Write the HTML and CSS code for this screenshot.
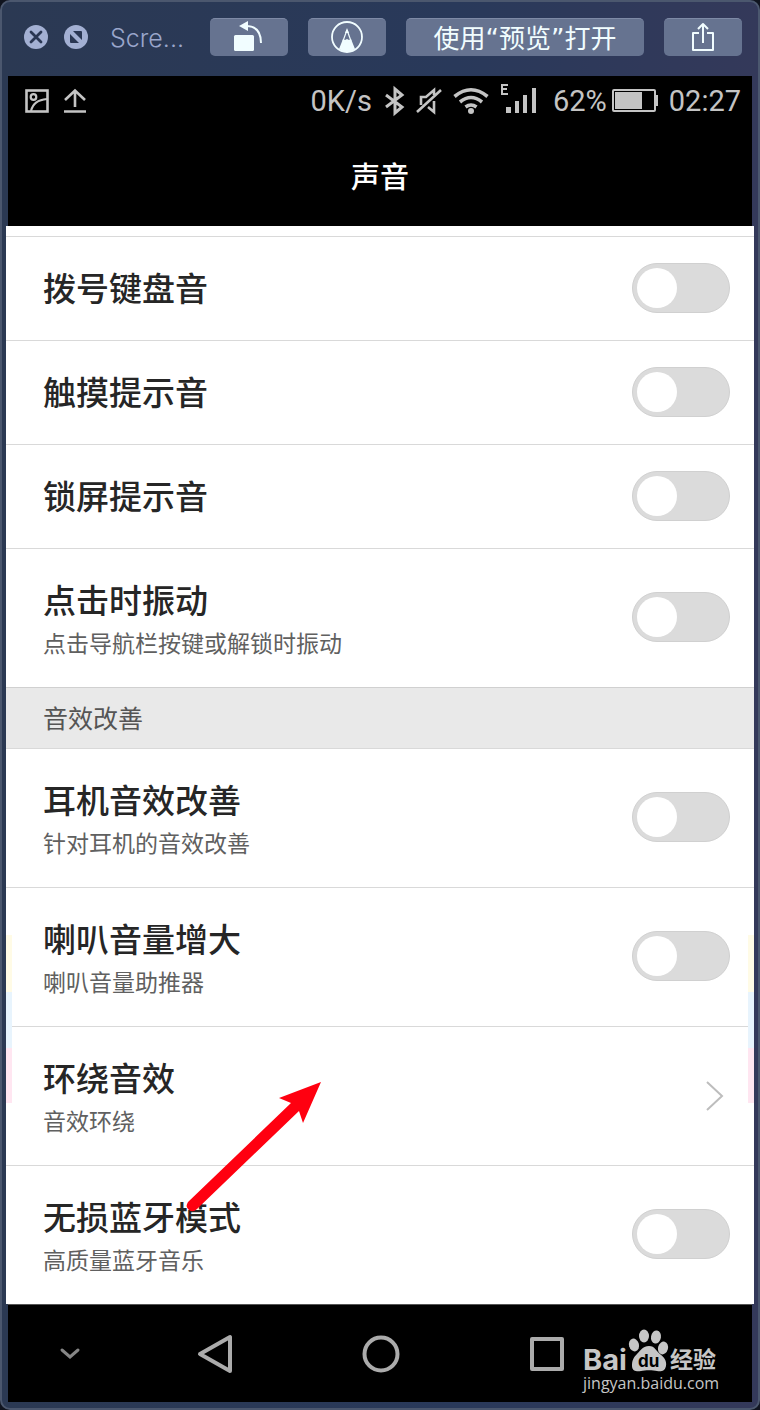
FILE: index.html
```html
<!DOCTYPE html>
<html lang="zh-CN">
<head>
    <meta charset="UTF-8">
    <meta name="viewport" content="width=device-width, initial-scale=1.0">
    <title>声音</title>
    <link rel="stylesheet" href="styles.css">
</head>
<body>

<div class="window">
    <div class="toolbar">
        <button type="button" class="round-button" aria-label="关闭">
            <svg width="24" height="24" viewBox="0 0 24 24">
                <circle cx="12" cy="12" r="12" fill="#a3b0d3"/>
                <path d="M7 7l10 10M17 7L7 17" stroke="#2a3753" stroke-width="2.8" stroke-linecap="round"/>
            </svg>
        </button>
        <button type="button" class="round-button" aria-label="全屏">
            <svg width="24" height="24" viewBox="0 0 24 24">
                <circle cx="12" cy="12" r="12" fill="#a3b0d3"/>
                <path d="M9 6h8a1 1 0 0 1 1 1v8zM6 9v8a1 1 0 0 0 1 1h8z" fill="#2a3753"/>
            </svg>
        </button>
        <span class="window-title">Scre...</span>
        <button type="button" class="tool-button" aria-label="旋转">
            <svg width="30" height="32" viewBox="0 0 30 32" fill="none">
                <rect x="0" y="14" width="20" height="16" rx="1.5" fill="#f1fdff"/>
                <path d="M12 5C22 5 27 11 27 22" stroke="#f1fdff" stroke-width="2"/>
                <path d="M5 5l9-5v10z" fill="#f1fdff"/>
            </svg>
        </button>
        <button type="button" class="tool-button" aria-label="标记">
            <svg width="32" height="32" viewBox="0 0 32 32" fill="none">
                <circle cx="16" cy="16" r="15" stroke="#f1fdff" stroke-width="1.8"/>
                <path d="M16 9l-4 11M16 9l4 11" stroke="#f1fdff" stroke-width="1.2"/>
                <path d="M16 7l-2 5h4z" fill="#f1fdff"/>
                <path d="M12 18l2 1 2-1 2 1 2-1 4 10q-8 6-16 0z" fill="#f1fdff"/>
            </svg>
        </button>
        <button type="button" class="tool-button open-button">使用“预览”打开</button>
        <button type="button" class="tool-button" aria-label="共享">
            <svg width="24" height="30" viewBox="0 0 24 30" fill="none" stroke="#f1fdff" stroke-width="2" stroke-linejoin="round">
                <path d="M8 11H2v17h20V11h-6M12 21V2M7 7l5-5 5 5"/>
            </svg>
        </button>
    </div>

    <header class="phone-header">
        <div class="status-bar">
            <svg width="24" height="24" viewBox="0 0 24 24" fill="none" stroke="#c4c4c4" stroke-width="2.6">
                <rect x="1.5" y="1.5" width="21" height="21"/>
                <circle cx="8.500" cy="8" r="2.800" stroke-width="2.2"/>
                <path d="M6 22C8 14 13 11 22 10" stroke-width="2.2"/>
            </svg>
            <svg class="upload-icon" width="22" height="24" viewBox="0 0 22 24" fill="none" stroke="#c4c4c4" stroke-width="2.6">
                <path d="M11 18V2M1 11l10-9.500L21 11M0 22.500h22"/>
            </svg>
            <span>0K/s</span>
            <svg width="22" height="28" viewBox="0 0 22 28" fill="none" stroke="#c4c4c4" stroke-width="3">
                <path d="M3 8l16 12-7 6V2l7 6L3 20"/>
            </svg>
            <svg width="26" height="28" viewBox="0 0 26 28" fill="none" stroke="#c4c4c4" stroke-width="2.6">
                <path d="M1 25L25 3M5 18v-8h5l8-7v5M18 14v11l-6-5"/>
            </svg>
            <svg width="36" height="28" viewBox="0 0 36 28" fill="none" stroke="#c4c4c4" stroke-width="3.600">
                <path d="M1.500 9.500Q18-4 34.500 9.500M7 15q11-9 22 0M12.500 20q5.500-4 11 0"/>
                <circle cx="18" cy="24" r="3" fill="#c4c4c4" stroke="none"/>
            </svg>
            <svg width="42" height="34" viewBox="0 0 42 34" fill="#c4c4c4">
                <path d="M1 0h7v2H3v2h4v2H3v3h5v2H1z"/>
                <rect x="6" y="23" width="5" height="6"/>
                <rect x="15" y="17" width="4" height="12"/>
                <rect x="23" y="11" width="4" height="18"/>
                <rect x="32" y="4" width="4" height="25"/>
            </svg>
            <span class="battery">62%
                <svg width="46" height="24" viewBox="0 0 46 24" fill="none">
                    <rect x="1" y="1" width="42" height="21" rx="1" stroke="#c4c4c4" stroke-width="2"/>
                    <rect x="3" y="3" width="27" height="17" fill="#c4c4c4"/>
                    <rect x="43" y="6" width="3" height="11" fill="#c4c4c4"/>
                </svg>
            </span>
            <span>02:27</span>
        </div>
        <h1>声音</h1>
    </header>

    <main class="settings">
        <label class="row">
            <span class="row-title">拨号键盘音</span>
            <input type="checkbox" class="switch">
        </label>
        <label class="row">
            <span class="row-title">触摸提示音</span>
            <input type="checkbox" class="switch">
        </label>
        <label class="row">
            <span class="row-title">锁屏提示音</span>
            <input type="checkbox" class="switch">
        </label>
        <label class="row">
            <span class="row-text">
                <span class="row-title">点击时振动</span>
                <span class="row-note">点击导航栏按键或解锁时振动</span>
            </span>
            <input type="checkbox" class="switch">
        </label>

        <h2>音效改善</h2>

        <label class="row">
            <span class="row-text">
                <span class="row-title">耳机音效改善</span>
                <span class="row-note">针对耳机的音效改善</span>
            </span>
            <input type="checkbox" class="switch">
        </label>
        <label class="row">
            <span class="row-text">
                <span class="row-title">喇叭音量增大</span>
                <span class="row-note">喇叭音量助推器</span>
            </span>
            <input type="checkbox" class="switch">
        </label>
        <a href="#" class="row">
            <span class="row-text">
                <span class="row-title">环绕音效</span>
                <span class="row-note">音效环绕</span>
            </span>
            <svg class="chevron" width="18" height="30" viewBox="0 0 18 30" fill="none" stroke="#bdbdbd" stroke-width="2">
                <path d="M1 1l15 14L1 29"/>
            </svg>
            <span class="edge edge-left"></span>
            <span class="edge edge-right"></span>
            <svg class="arrow" width="136" height="130" viewBox="0 0 136 130">
                <path d="M134 0L92 16l12 5L1 120q-3 5 1 8t8-1L112 29l4 12z" fill="#ff0010"/>
            </svg>
        </a>
        <label class="row">
            <span class="row-text">
                <span class="row-title">无损蓝牙模式</span>
                <span class="row-note">高质量蓝牙音乐</span>
            </span>
            <input type="checkbox" class="switch">
        </label>
    </main>

    <nav class="nav-bar">
        <button type="button" aria-label="收起">
            <svg width="20" height="12" viewBox="0 0 20 12" fill="none" stroke="#858585" stroke-width="3" stroke-linecap="round">
                <path d="M2 2l8 7 8-7"/>
            </svg>
        </button>
        <button type="button" aria-label="返回">
            <svg width="36" height="40" viewBox="0 0 36 40" fill="none" stroke="#ababab" stroke-width="4" stroke-linejoin="round">
                <path d="M33 3v34L3 20z"/>
            </svg>
        </button>
        <button type="button" aria-label="主屏幕">
            <svg width="38" height="38" viewBox="0 0 38 38" fill="none" stroke="#ababab" stroke-width="4">
                <circle cx="19" cy="19" r="16.500"/>
            </svg>
        </button>
        <button type="button" aria-label="最近任务">
            <svg width="34" height="34" viewBox="0 0 34 34" fill="none" stroke="#ababab" stroke-width="4" stroke-linejoin="round">
                <rect x="2" y="2" width="30" height="30"/>
            </svg>
        </button>
        <svg class="watermark" width="140" height="68" viewBox="0 0 140 68" fill="#c6c6c6">
            <text class="logo-bai" x="0" y="40">Bai</text>
            <ellipse cx="51" cy="15" rx="5" ry="6.500" transform="rotate(-15 51 15)"/>
            <ellipse cx="61" cy="6" rx="5" ry="6.500"/>
            <ellipse cx="73" cy="7" rx="5" ry="6.500" transform="rotate(10 73 7)"/>
            <ellipse cx="80" cy="18" rx="5" ry="6.500" transform="rotate(15 80 18)"/>
            <path d="M66 16c6 0 7 5 11 8s7 7 6 12-5 6-9 5-12-1-16 0-9 0-9-5 1-8 5-12 6-8 12-8z"/>
            <text class="logo-du" x="55" y="37">du</text>
            <text class="logo-name" x="87" y="38">经验</text>
            <text class="logo-url" x="0" y="59">jingyan.baidu.com</text>
        </svg>
    </nav>
</div>

</body>
</html>
```

FILE: styles.css
```css
* {
    box-sizing: border-box;
}
body {
    margin: 0;
    background: #10141f;
    font-family: Roboto, "Noto Sans CJK SC", sans-serif;
}
button {
    padding: 0;
    border: none;
    background: none;
    cursor: pointer;
}
svg {
    display: block;
    flex: none;
    overflow: visible;
}
.window {
    display: flex;
    flex-direction: column;
    border: 2px solid #4b576e;
    border-radius: 10px;
    background: linear-gradient(90deg, #2b3953, #29395a 60%, #34395a);
    overflow: hidden;
}

/* preview toolbar */
.toolbar {
    display: flex;
    align-items: center;
    height: 74px;
    padding: 0 16px 4px 22px;
}
.round-button {
    margin-right: 16px;
}
.window-title {
    width: 85px;
    margin-left: 6px;
    padding-top: 2px;
    color: #9aa6cb;
    font-family: Inter, sans-serif;
    font-size: 25px;
    font-weight: 300;
}
.tool-button {
    display: flex;
    align-items: center;
    justify-content: center;
    width: 78px;
    height: 38px;
    margin-left: 20px;
    padding-bottom: 2px;
    border-top: 1px solid #7e8aa6;
    border-radius: 5px;
    background: #667390;
    color: #f1fdff;
}
.window-title + .tool-button {
    margin-left: 15px;
}
.open-button {
    flex: 1;
    font-family: "DejaVu Sans", "Noto Sans CJK SC", sans-serif;
    font-size: 26px;
    font-weight: 400;
}

/* phone status bar and title */
.phone-header {
    margin: 0 6px;
    background: #000;
    color: #c4c4c4;
}
.status-bar {
    display: flex;
    align-items: center;
    gap: 11px;
    height: 50px;
    padding: 0 11px 0 17px;
    font-size: 29px;
}
.upload-icon {
    margin-left: 4px;
    margin-right: auto;
}
.battery {
    display: flex;
    align-items: center;
    gap: 5px;
}
.phone-header h1 {
    margin: 0;
    padding-top: 4px;
    color: #fff;
    font-size: 29px;
    font-weight: 500;
    line-height: 96px;
    text-align: center;
}

/* settings list */
.settings {
    margin: 0 4px;
    padding-top: 10px;
    background: #fff;
}
.row {
    position: relative;
    display: flex;
    align-items: center;
    justify-content: space-between;
    padding: 28px 24px 28px 37px;
    border-top: 1px solid #d9d9d9;
    color: #262626;
    text-decoration: none;
}
.row-text {
    display: flex;
    flex-direction: column;
    gap: 6px;
}
.row-title {
    padding-top: 2px;
    font-size: 33px;
    font-weight: 500;
    line-height: 45px;
}
.row-note {
    color: #606060;
    font-size: 23px;
    line-height: 29px;
}
.settings h2 {
    margin: 0;
    padding: 4px 0 0 37px;
    border-top: 1px solid #d0d0d0;
    background: #e9e9e9;
    color: #555;
    font-size: 25px;
    font-weight: 400;
    line-height: 56px;
}
.switch {
    appearance: none;
    flex: none;
    width: 98px;
    height: 50px;
    margin: -4px 0 -2px;
    padding: 4px;
    border: 1px solid #d0d0d0;
    border-radius: 25px;
    background: #dbdbdb;
    cursor: pointer;
}
.switch::before {
    content: "";
    display: block;
    width: 40px;
    height: 40px;
    border-radius: 50%;
    background: #fff;
}
.switch:checked {
    background: #35b5a5;
}
.switch:checked::before {
    margin-left: auto;
}
.chevron {
    margin-right: 6px;
}
.edge {
    position: absolute;
    top: -92px;
    width: 6px;
    height: 168px;
    background: linear-gradient(#fffbe6 34%, #e8f4fd 34% 67%, #ffe6f1 67%);
}
.edge-left {
    left: 0;
}
.edge-right {
    right: 0;
}
.arrow {
    position: absolute;
    z-index: 1;
    top: 55px;
    left: 181px;
}

/* navigation keys */
.nav-bar {
    position: relative;
    display: grid;
    grid-template-columns: 3fr 4fr 4fr 4fr;
    height: 98px;
    margin: 0 6px 6px;
    padding-right: 122px;
    border-top: 1px solid #555;
    background: #000;
}
.nav-bar button {
    display: flex;
    align-items: center;
    justify-content: center;
}
.watermark {
    position: absolute;
    top: 25px;
    right: 29px;
}
.logo-bai {
    font-family: Inter, sans-serif;
    font-size: 29px;
    font-weight: 700;
}
.logo-du {
    fill: #000;
    font-family: Inter, sans-serif;
    font-size: 17px;
    font-weight: 700;
}
.logo-name {
    font-family: "Noto Sans CJK SC", sans-serif;
    font-size: 23px;
    font-weight: 700;
}
.logo-url {
    font-family: "Open Sans", sans-serif;
    font-size: 16px;
}
```
